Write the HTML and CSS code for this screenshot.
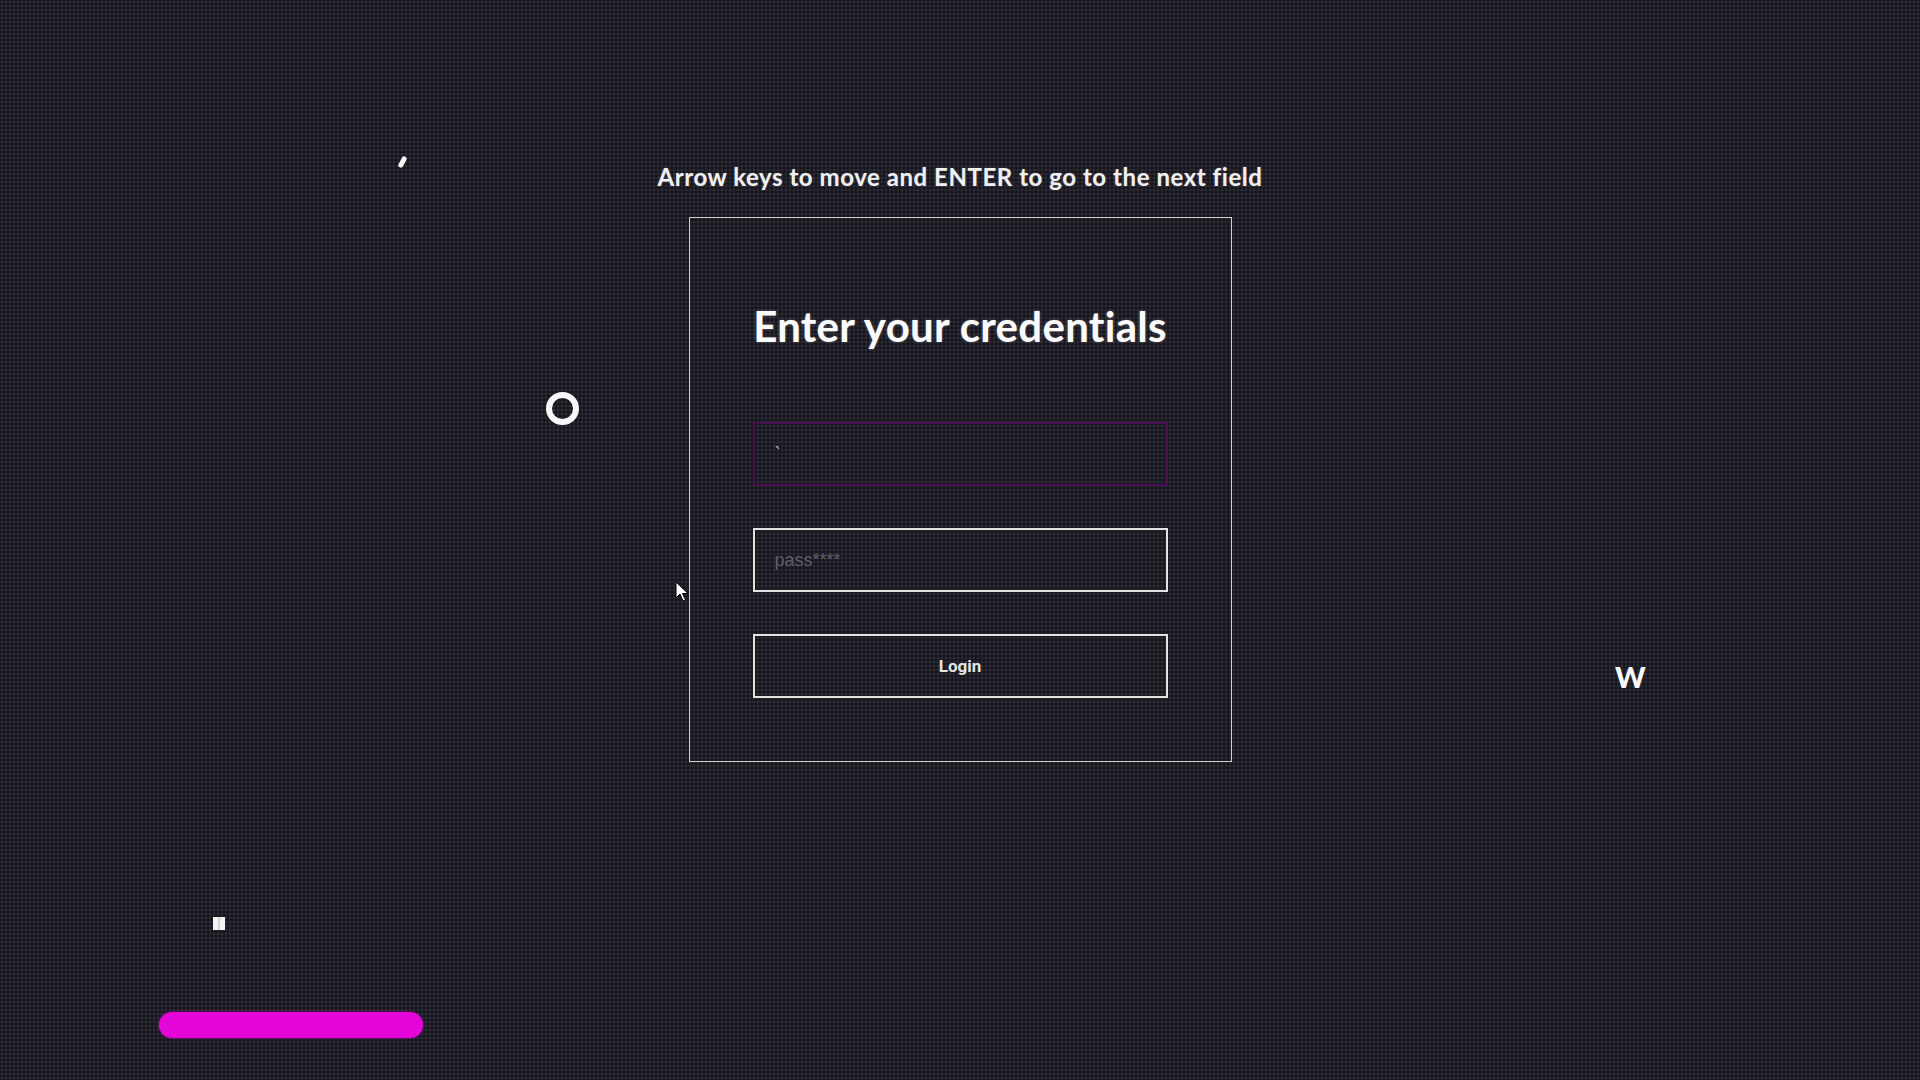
FILE: index.html
```html
<!DOCTYPE html>
<html lang="en">
<head>
<meta charset="utf-8">
<title>Login</title>
<link rel="stylesheet" href="styles.css">
</head>
<body>
<main class="stage">
  <p class="hint">Arrow keys to move and ENTER to go to the next field</p>
  <section class="card">
    <h1 class="card-title">Enter your credentials</h1>
    <form class="form">
      <input class="field field-active" type="text" value="`">
      <input class="field" type="password" placeholder="pass****">
      <button class="btn" type="button">Login</button>
    </form>
  </section>

  <span class="bit bit-tick"></span>
  <span class="bit bit-ring"></span>
  <span class="bit bit-w">W</span>
  <span class="bit bit-block"></span>
  <span class="bit bit-paddle"></span>
  <svg class="bit cursor" width="14" height="22" viewBox="0 0 14 22">
    <path d="M1 1 L1 17 L5 13 L8 20 L10.5 19 L7.5 12.5 L13 12.5 Z" fill="#fff" stroke="#000" stroke-width="1"/>
  </svg>
</main>
</body>
</html>
```

FILE: styles.css
```css
html, body {
  margin: 0;
  padding: 0;
  width: 100%;
  height: 100%;
}

body {
  background-color: #1f1e23;
  background-image:
    radial-gradient(circle, rgba(58, 56, 105, 0.45) 0.8px, transparent 1.1px),
    radial-gradient(circle, rgba(12, 12, 8, 0.55) 0.8px, transparent 1.1px);
  background-size: 4px 4px, 4px 4px;
  background-position: 0 0, 2px 2px;
  font-family: "Lato", "Liberation Sans", sans-serif;
  color: #f2f2f2;
  overflow: hidden;
}

.stage {
  position: relative;
  width: 1920px;
  height: 1080px;
  display: flex;
  flex-direction: column;
  align-items: center;
  padding-top: 163px;
  box-sizing: border-box;
}

.hint {
  margin: 0 0 26px;
  font-size: 24px;
  line-height: 28px;
  font-weight: 700;
  letter-spacing: 0.55px;
  color: #f0f0f0;
  text-shadow: 0 0 2px rgba(255, 255, 255, 0.25);
}

.card {
  width: 543px;
  box-sizing: border-box;
  border: 1px solid #cfcfd2;
  padding: 83px 63px 63px;
}

.card-title {
  margin: 0 0 71px;
  text-align: center;
  white-space: nowrap;
  font-size: 42px;
  line-height: 50px;
  font-weight: 700;
  letter-spacing: 0.3px;
  color: #fafafa;
  text-shadow: 0 0 3px rgba(255, 255, 255, 0.3);
}

.form {
  display: flex;
  flex-direction: column;
  gap: 42px;
}

.field {
  display: block;
  width: 100%;
  height: 64px;
  box-sizing: border-box;
  margin: 0;
  padding: 0 20px;
  background: transparent;
  border: 2px solid #e2e2e2;
  border-radius: 0;
  font-family: "Liberation Sans", Arial, sans-serif;
  font-size: 18px;
  color: #c8c8c8;
  outline: none;
}

.field::placeholder {
  color: #5e5d63;
}

.field-active {
  border-color: #4c0e52;
  color: #bdbdbd;
}

.btn {
  display: block;
  width: 100%;
  height: 64px;
  box-sizing: border-box;
  margin: 0;
  background: transparent;
  border: 2px solid #e2e2e2;
  border-radius: 0;
  font-family: "Roboto", "Liberation Sans", sans-serif;
  font-size: 17px;
  font-weight: 700;
  color: #e4e4e4;
  cursor: pointer;
}

/* free-floating game pieces */
.bit {
  position: absolute;
  display: block;
}

.bit-tick {
  left: 400px;
  top: 156px;
  width: 5px;
  height: 12px;
  background: #f4f4f4;
  border-radius: 3px;
  transform: rotate(28deg);
}

.bit-ring {
  left: 546px;
  top: 392px;
  width: 21px;
  height: 21px;
  border: 6px solid #f7f7f7;
  border-radius: 50%;
}

.bit-w {
  left: 1615px;
  top: 659px;
  font-family: "Lato", sans-serif;
  font-size: 29px;
  line-height: 36px;
  font-weight: 900;
  color: #f7f7f7;
}

.bit-block {
  left: 213px;
  top: 917px;
  width: 12px;
  height: 13px;
  background: linear-gradient(90deg, #f4f4f4 0 5px, #d6d6d6 5px 7px, #f4f4f4 7px);
}

.bit-paddle {
  left: 159px;
  top: 1012px;
  width: 264px;
  height: 26px;
  border-radius: 13px;
  background: #e406d8;
  box-shadow: 0 0 3px rgba(228, 6, 216, 0.6);
}

.cursor {
  left: 675px;
  top: 581px;
}
```
